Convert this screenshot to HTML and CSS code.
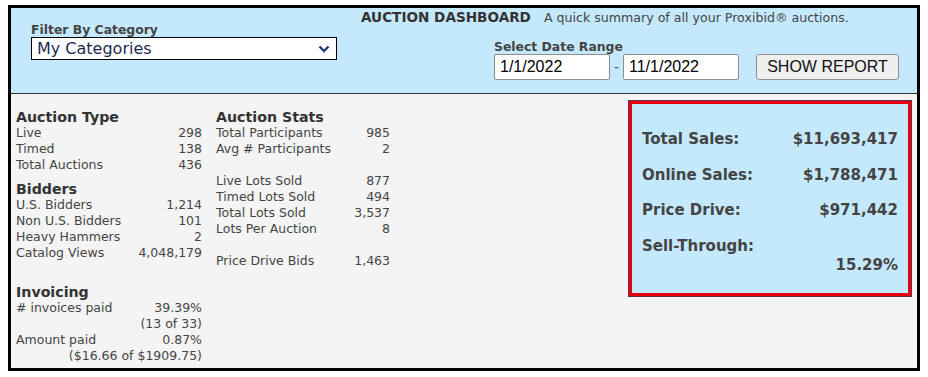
FILE: index.html
```html
<!DOCTYPE html>
<html>
<head>
<meta charset="utf-8">
<link rel="stylesheet" href="styles.css">
</head>
<body>
<div class="frame">
  <div class="header">
    <div class="filter">
      <div class="label">Filter By Category</div>
      <div class="select">
        <span>My Categories</span>
        <svg class="chev" width="12" height="8" viewBox="0 0 12 8"><path d="M1.5 1.5 L6 6 L10.5 1.5" fill="none" stroke="#253a72" stroke-width="2.4"/></svg>
      </div>
    </div>
    <div class="right-head">
      <div class="title"><b>AUCTION DASHBOARD</b><span class="sub">A quick summary of all your Proxibid® auctions.</span></div>
      <div class="dates">
        <div class="label">Select Date Range</div>
        <div class="date-row">
          <div class="input">1/1/2022</div>
          <span class="dash">-</span>
          <div class="input">11/1/2022</div>
          <button class="btn">SHOW REPORT</button>
        </div>
      </div>
    </div>
  </div>
  <div class="body">
    <div class="col col-left">
      <div class="h">Auction Type</div>
      <div class="row"><span>Live</span><span>298</span></div>
      <div class="row"><span>Timed</span><span>138</span></div>
      <div class="row"><span>Total Auctions</span><span>436</span></div>
      <div class="h h-gap">Bidders</div>
      <div class="row"><span>U.S. Bidders</span><span>1,214</span></div>
      <div class="row"><span>Non U.S. Bidders</span><span>101</span></div>
      <div class="row"><span>Heavy Hammers</span><span>2</span></div>
      <div class="row"><span>Catalog Views</span><span>4,048,179</span></div>
      <div class="h h-gap2">Invoicing</div>
      <div class="row"><span># invoices paid</span><span>39.39%</span></div>
      <div class="row"><span></span><span>(13 of 33)</span></div>
      <div class="row"><span>Amount paid</span><span>0.87%</span></div>
      <div class="row"><span></span><span>($16.66 of $1909.75)</span></div>
    </div>
    <div class="col col-mid">
      <div class="h">Auction Stats</div>
      <div class="row"><span>Total Participants</span><span>985</span></div>
      <div class="row"><span>Avg # Participants</span><span>2</span></div>
      <div class="row blank"></div>
      <div class="row"><span>Live Lots Sold</span><span>877</span></div>
      <div class="row"><span>Timed Lots Sold</span><span>494</span></div>
      <div class="row"><span>Total Lots Sold</span><span>3,537</span></div>
      <div class="row"><span>Lots Per Auction</span><span>8</span></div>
      <div class="row blank"></div>
      <div class="row"><span>Price Drive Bids</span><span>1,463</span></div>
    </div>
    <div class="summary">
      <div class="srow"><span>Total Sales:</span><span>$11,693,417</span></div>
      <div class="srow"><span>Online Sales:</span><span>$1,788,471</span></div>
      <div class="srow"><span>Price Drive:</span><span>$971,442</span></div>
      <div class="srow last"><span>Sell-Through:</span></div>
      <div class="srow val-only"><span>15.29%</span></div>
    </div>
  </div>
</div>
</body>
</html>
```

FILE: styles.css
```css
html, body {
  margin: 0;
  padding: 0;
  background: #ffffff;
}
body {
  font-family: "DejaVu Sans", Verdana, sans-serif;
  color: #444;
}
.frame {
  margin: 5px 0 0 8px;
  width: 906px;
  height: 360px;
  border: 3px solid #000;
  display: flex;
  flex-direction: column;
  background: #f4f4f4;
}
.header {
  height: 85px;
  background: #c5e9fc;
  border-bottom: 1px solid #333;
  display: flex;
  flex-shrink: 0;
}
.label {
  font-weight: bold;
  font-size: 12.4px;
  line-height: 16px;
  color: #444;
}
.filter {
  margin-left: 20px;
  padding-top: 13px;
  width: 306px;
}
.filter .label {
  padding-top: 1px;
  line-height: 15px;
}
.select {
  box-sizing: border-box;
  height: 23px;
  border: 1px solid #000;
  background: #fff;
  display: flex;
  align-items: center;
  justify-content: space-between;
  padding: 0 6px 0 5px;
  font-size: 16px;
  color: #1d2b52;
}
.right-head {
  margin-left: 24px;
  padding-top: 1px;
}
.title {
  font-size: 12.6px;
  line-height: 16px;
  color: #444;
}
.title b {
  font-size: 13.6px;
  color: #333;
}
.sub {
  margin-left: 13px;
}
.dates {
  margin-left: 133px;
  margin-top: 12px;
}
.dates .label {
  padding-top: 1px;
  line-height: 15px;
}
.date-row {
  display: flex;
  align-items: center;
}
.input {
  box-sizing: border-box;
  width: 116px;
  height: 26px;
  background: #fff;
  border: 1px solid #8f8f8f;
  border-radius: 2px;
  font-family: "Liberation Sans", Arial, sans-serif;
  font-size: 16px;
  color: #000;
  line-height: 24px;
  padding-left: 5px;
}
.dash {
  width: 13px;
  text-align: center;
  font-family: "Liberation Sans", Arial, sans-serif;
  font-size: 14px;
  color: #555;
}
.btn {
  box-sizing: border-box;
  margin-left: 17px;
  width: 143px;
  height: 26px;
  background: #efefef;
  border: 1px solid #8f8f8f;
  border-radius: 3px;
  font-family: "Liberation Sans", Arial, sans-serif;
  font-size: 16px;
  color: #111;
  padding: 0;
}
.body {
  flex: 1;
  display: flex;
  align-items: flex-start;
  padding-left: 5px;
}
.col {
  padding-top: 13px;
  font-size: 12.5px;
  line-height: 16px;
}
.col-left {
  width: 186px;
}
.col-mid {
  width: 174px;
  margin-left: 14px;
}
.h {
  font-weight: bold;
  font-size: 14.2px;
  padding-top: 3px;
  line-height: 15px;
  color: #333;
}
.h-gap {
  margin-top: 6px;
}
.h-gap2 {
  margin-top: 21px;
}
.row {
  display: flex;
  justify-content: space-between;
  height: 16px;
  white-space: nowrap;
}
.summary {
  margin-left: auto;
  margin-right: 6px;
  margin-top: 7px;
  box-sizing: border-box;
  width: 282px;
  height: 195px;
  border: 3px solid #e8000b;
  box-shadow: 0 0 0 1px #6a2a50;
  background: #c5e9fc;
  padding: 26px 10px 0 10px;
  font-weight: bold;
  font-size: 15px;
  line-height: 18px;
  color: #444;
}
.srow {
  display: flex;
  justify-content: space-between;
  margin-bottom: 17.5px;
}
.srow.last {
  margin-bottom: 1px;
}
.val-only {
  justify-content: flex-end;
}
```
